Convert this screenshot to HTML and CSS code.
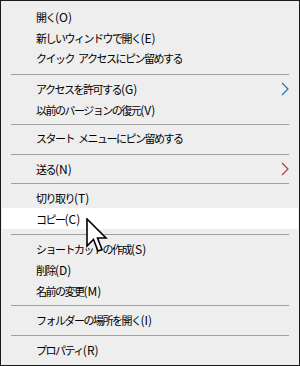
FILE: index.html
```html
<!DOCTYPE html>
<html lang="ja">

<head>
    <meta charset="UTF-8">
    <meta name="viewport" content="width=device-width, initial-scale=1.0">
    <title>Context Menu</title>
    <link rel="stylesheet" href="styles.css">
</head>

<body>
    <div class="menu">
        <div class="item">開く<span class="key">(O)</span></div>
        <div class="item">新しいウィンドウで開く<span class="key">(E)</span></div>
        <div class="item">クイック アクセスにピン留めする</div>
        <div class="sep"></div>
        <div class="item">アクセスを許可する<span class="key">(G)</span>
            <svg class="arrow" width="8" height="14" viewBox="0 0 8 14"><path d="M1 1 L7 7 L1 13" fill="none" stroke="#2f6db0" stroke-width="1.2"/></svg>
        </div>
        <div class="item">以前のバージョンの復元<span class="key">(V)</span></div>
        <div class="sep"></div>
        <div class="item">スタート メニューにピン留めする</div>
        <div class="sep"></div>
        <div class="item">送る<span class="key">(N)</span>
            <svg class="arrow" width="8" height="14" viewBox="0 0 8 14"><path d="M1 1 L7 7 L1 13" fill="none" stroke="#b3384c" stroke-width="1.2"/></svg>
        </div>
        <div class="sep"></div>
        <div class="item">切り取り<span class="key">(T)</span></div>
        <div class="item hover">コピー<span class="key">(C)</span>
            <svg class="cursor" width="22" height="38" viewBox="0 0 22 38"><path d="M1 1 L1 28 L7.5 21.5 L12 33 L16 31.5 L11.5 20 L20 20 Z" fill="#fff" stroke="#000" stroke-width="1.6" stroke-linejoin="miter"/></svg>
        </div>
        <div class="sep"></div>
        <div class="item">ショートカットの作成<span class="key">(S)</span></div>
        <div class="item">削除<span class="key">(D)</span></div>
        <div class="item">名前の変更<span class="key">(M)</span></div>
        <div class="sep"></div>
        <div class="item">フォルダーの場所を開く<span class="key">(I)</span></div>
        <div class="sep"></div>
        <div class="item">プロパティ<span class="key">(R)</span></div>
    </div>
</body>

</html>
```

FILE: styles.css
```css
* {
    box-sizing: border-box;
    margin: 0;
    padding: 0;
}

body {
    width: 300px;
    height: 366px;
    font-family: "Noto Sans CJK JP", "Noto Sans", sans-serif;
    font-size: 12px;
    color: #000;
    background: #eeeeee;
}

.menu {
    width: 300px;
    height: 366px;
    border: 1px solid #1a1a1a;
    background: #eeeeee;
    padding-top: 5px;
}

.item {
    position: relative;
    height: 21px;
    line-height: 21px;
    padding-left: 35px;
    font-size: 11px;
    letter-spacing: -1.5px;
    word-spacing: 3px;
    white-space: nowrap;
}

.key {
    font-size: 12px;
    letter-spacing: 0;
}

.hover {
    background: #ffffff;
    margin: 0 1px;
    padding-left: 34px;
}

.sep {
    height: 1px;
    background: #a0a0a0;
    margin: 4.5px 10px 3px 10px;
}

.arrow {
    position: absolute;
    right: 10px;
    top: 4px;
}

.cursor {
    position: absolute;
    left: 84px;
    top: 10px;
    z-index: 2;
}
```
